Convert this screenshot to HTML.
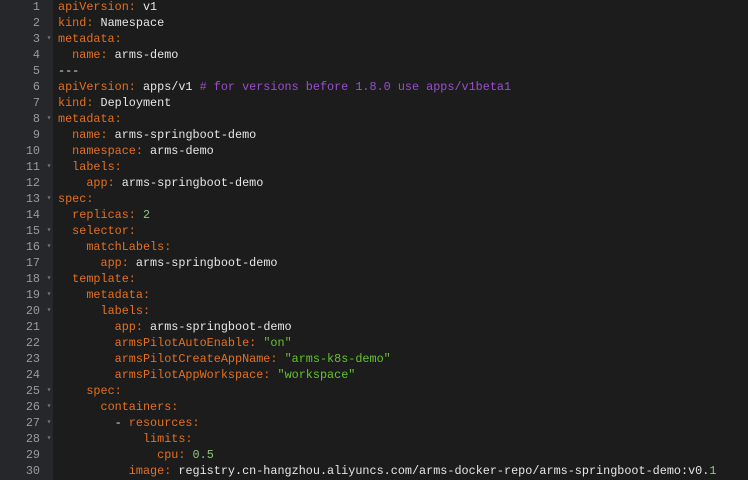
<!DOCTYPE html>
<html><head><meta charset="utf-8"><style>
html,body{margin:0;padding:0;background:#1c1c1c;width:748px;height:480px;overflow:hidden}
.g{position:absolute;left:0;top:0;width:53px;height:480px;background:#25272a}
.c{position:absolute;left:0;top:-1px;font-family:"Liberation Mono",monospace;font-size:11.8px;line-height:16px;color:#e6e6e6}
.l{height:16px;position:relative;white-space:pre}
.n{display:inline-block;width:40px;text-align:right;color:#9a9a9a;}
.f{display:inline-block;width:18px;color:#777;font-size:8px;text-align:center;vertical-align:top}
.k{color:#e5701f}.s{color:#62c42c}.m{color:#8fc47a}.cm{color:#9a4fcf}
</style></head><body><div class="g"></div><div class="c">
<div class="l"><span class="n">1</span><span class="f"> </span><span class="k">apiVersion:</span> v1</div>
<div class="l"><span class="n">2</span><span class="f"> </span><span class="k">kind:</span> Namespace</div>
<div class="l"><span class="n">3</span><span class="f">▾</span><span class="k">metadata:</span></div>
<div class="l"><span class="n">4</span><span class="f"> </span>  <span class="k">name:</span> arms-demo</div>
<div class="l"><span class="n">5</span><span class="f"> </span>---</div>
<div class="l"><span class="n">6</span><span class="f"> </span><span class="k">apiVersion:</span> apps/v1 <span class="cm"># for versions before 1.8.0 use apps/v1beta1</span></div>
<div class="l"><span class="n">7</span><span class="f"> </span><span class="k">kind:</span> Deployment</div>
<div class="l"><span class="n">8</span><span class="f">▾</span><span class="k">metadata:</span></div>
<div class="l"><span class="n">9</span><span class="f"> </span>  <span class="k">name:</span> arms-springboot-demo</div>
<div class="l"><span class="n">10</span><span class="f"> </span>  <span class="k">namespace:</span> arms-demo</div>
<div class="l"><span class="n">11</span><span class="f">▾</span>  <span class="k">labels:</span></div>
<div class="l"><span class="n">12</span><span class="f"> </span>    <span class="k">app:</span> arms-springboot-demo</div>
<div class="l"><span class="n">13</span><span class="f">▾</span><span class="k">spec:</span></div>
<div class="l"><span class="n">14</span><span class="f"> </span>  <span class="k">replicas:</span> <span class="m">2</span></div>
<div class="l"><span class="n">15</span><span class="f">▾</span>  <span class="k">selector:</span></div>
<div class="l"><span class="n">16</span><span class="f">▾</span>    <span class="k">matchLabels:</span></div>
<div class="l"><span class="n">17</span><span class="f"> </span>      <span class="k">app:</span> arms-springboot-demo</div>
<div class="l"><span class="n">18</span><span class="f">▾</span>  <span class="k">template:</span></div>
<div class="l"><span class="n">19</span><span class="f">▾</span>    <span class="k">metadata:</span></div>
<div class="l"><span class="n">20</span><span class="f">▾</span>      <span class="k">labels:</span></div>
<div class="l"><span class="n">21</span><span class="f"> </span>        <span class="k">app:</span> arms-springboot-demo</div>
<div class="l"><span class="n">22</span><span class="f"> </span>        <span class="k">armsPilotAutoEnable:</span> <span class="s">"on"</span></div>
<div class="l"><span class="n">23</span><span class="f"> </span>        <span class="k">armsPilotCreateAppName:</span> <span class="s">"arms-k8s-demo"</span></div>
<div class="l"><span class="n">24</span><span class="f"> </span>        <span class="k">armsPilotAppWorkspace:</span> <span class="s">"workspace"</span></div>
<div class="l"><span class="n">25</span><span class="f">▾</span>    <span class="k">spec:</span></div>
<div class="l"><span class="n">26</span><span class="f">▾</span>      <span class="k">containers:</span></div>
<div class="l"><span class="n">27</span><span class="f">▾</span>        - <span class="k">resources:</span></div>
<div class="l"><span class="n">28</span><span class="f">▾</span>            <span class="k">limits:</span></div>
<div class="l"><span class="n">29</span><span class="f"> </span>              <span class="k">cpu:</span> <span class="m">0.5</span></div>
<div class="l"><span class="n">30</span><span class="f"> </span>          <span class="k">image:</span> registry.cn-hangzhou.aliyuncs.com/arms-docker-repo/arms-springboot-demo:v0.<span class="m">1</span></div>
</div></body></html>
